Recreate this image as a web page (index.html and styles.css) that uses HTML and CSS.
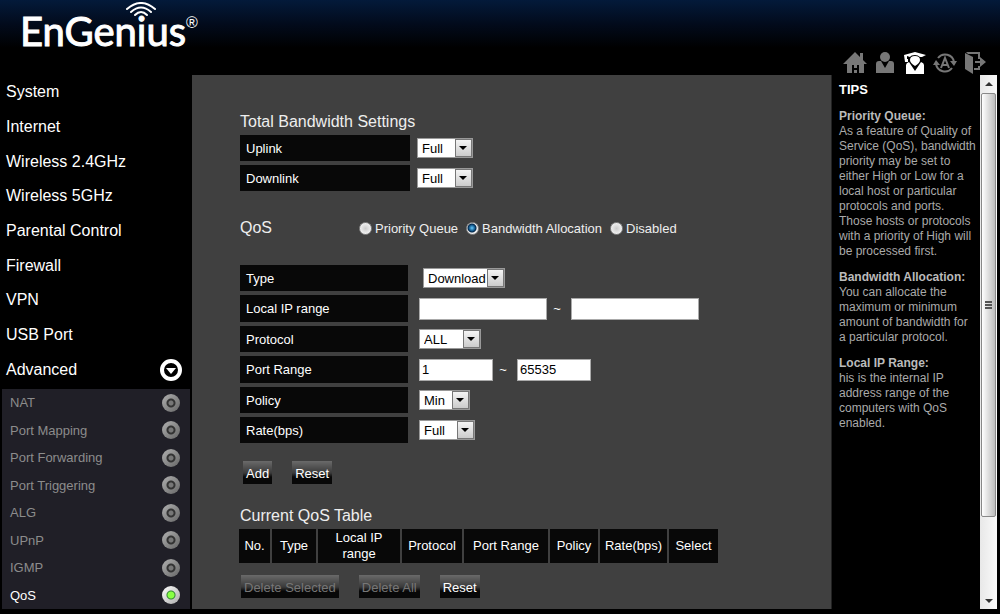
FILE: index.html
```html
<!DOCTYPE html>
<html lang="en">

<head>
    <meta charset="UTF-8">
    <meta name="viewport" content="width=device-width, initial-scale=1.0">
    <title>EnGenius - QoS</title>
    <link rel="stylesheet" href="styles.css">
</head>

<body>

    <header class="header">
        <a class="logo" href="#">
            <span class="logo-text">EnGenius</span><sup class="logo-mark">®</sup>
            <svg class="logo-waves" viewBox="0 0 32 16" width="32" height="16" fill="none" stroke="#fff" stroke-width="2" stroke-linecap="round">
                <path d="M2 7 Q16 -5 30 7" />
                <path d="M6 10 Q16 1 26 10" />
                <path d="M10 13 Q16 7 22 13" />
            </svg>
        </a>

        <nav class="tools">
            <a href="#" aria-label="Home">
                <svg viewBox="0 0 24 24" width="24" height="24" fill="currentColor">
                    <path d="M12 1 L0 13 H4 V22 H9 V14 H11 V17 H14 V14 H16 V22 H21 V13 H24 L20 9 V2 H17 V6 Z M11 19 H14 V22 H11 Z" />
                </svg>
            </a>
            <a href="#" aria-label="User">
                <svg viewBox="0 0 24 24" width="24" height="24" fill="currentColor">
                    <circle cx="12" cy="6" r="5" />
                    <path d="M3 13 Q3 10 6 10 H8 L12 17 L16 10 H18 Q21 10 21 13 V22 H3 Z" />
                </svg>
            </a>
            <a href="#" class="active" aria-label="Tips">
                <svg viewBox="0 0 24 24" width="24" height="24" fill="currentColor">
                    <path d="M1 4 L12 1 L23 4 L19 6 H17 Q15 4 12 4 Q8 4 7 6 L4 5 V8 H5 V11 H2 Z" />
                    <path d="M12 5 Q17 5 17 9 Q17 12 12 15 Q7 12 7 9 Q7 5 12 5 Z" />
                    <path d="M3 14 Q3 12 6 11 L12 20 L18 11 Q21 12 21 14 V23 H3 Z" />
                </svg>
            </a>
            <a href="#" aria-label="Auto">
                <svg viewBox="0 0 24 24" width="24" height="24" fill="none" stroke="currentColor" stroke-width="2">
                    <path d="M5 7 A9 9 0 0 1 21 11 M19 17 A9 9 0 0 1 3 13 M8 17 L12 7 L16 17 M9 14 H15" />
                    <path d="M0 14 L3 9 L7 14 Z M24 10 L21 15 L17 10 Z" fill="currentColor" stroke="none" />
                </svg>
            </a>
            <a href="#" aria-label="Logout">
                <svg viewBox="0 0 24 24" width="24" height="24" fill="currentColor">
                    <path d="M2 2 L10 6 V23 L2 18 Z" />
                    <path d="M3 1 H17 V8 H15 V3 H5 Z M15 15 H17 V19 H11 V17 H15 Z M12 10 H17 V6 L23 11 L17 16 V12 H12 Z" />
                </svg>
            </a>
        </nav>
    </header>

    <div class="page">

        <nav class="sidebar">
            <ul class="menu">
                <li><a href="#">System</a></li>
                <li><a href="#">Internet</a></li>
                <li><a href="#">Wireless 2.4GHz</a></li>
                <li><a href="#">Wireless 5GHz</a></li>
                <li><a href="#">Parental Control</a></li>
                <li><a href="#">Firewall</a></li>
                <li><a href="#">VPN</a></li>
                <li><a href="#">USB Port</a></li>
                <li>
                    <a href="#">Advanced</a>
                    <svg viewBox="0 0 24 24" width="24" height="24">
                        <circle cx="12" cy="12" r="9" fill="#000" stroke="#fff" stroke-width="4" />
                        <path d="M7 10 H17 L12 16 Z" fill="#fff" />
                    </svg>
                </li>
            </ul>
            <ul class="submenu">
                <li><a href="#">NAT</a><span class="led"></span></li>
                <li><a href="#">Port Mapping</a><span class="led"></span></li>
                <li><a href="#">Port Forwarding</a><span class="led"></span></li>
                <li><a href="#">Port Triggering</a><span class="led"></span></li>
                <li><a href="#">ALG</a><span class="led"></span></li>
                <li><a href="#">UPnP</a><span class="led"></span></li>
                <li><a href="#">IGMP</a><span class="led"></span></li>
                <li class="active"><a href="#">QoS</a><span class="led"></span></li>
            </ul>
        </nav>

        <main class="content">
            <h2>Total Bandwidth Settings</h2>
            <div class="form total">
                <label class="name" for="uplink">Uplink</label>
                <div class="field"><span class="select"><select id="uplink"><option>Full</option></select></span></div>
                <label class="name" for="downlink">Downlink</label>
                <div class="field"><span class="select"><select id="downlink"><option>Full</option></select></span></div>
            </div>

            <div class="mode">
                <h2>QoS</h2>
                <label><input type="radio" name="mode">Priority Queue</label>
                <label><input type="radio" name="mode" checked>Bandwidth Allocation</label>
                <label><input type="radio" name="mode">Disabled</label>
            </div>

            <div class="form">
                <label class="name" for="type">Type</label>
                <div class="field type-field"><span class="select"><select id="type" class="wide"><option>Download</option></select></span></div>

                <label class="name tall" for="ip-start">Local IP range</label>
                <div class="field">
                    <input type="text" class="ip" id="ip-start">
                    <span class="tilde">~</span>
                    <input type="text" class="ip" aria-label="Local IP range end">
                </div>

                <label class="name" for="protocol">Protocol</label>
                <div class="field"><span class="select"><select id="protocol" class="medium"><option>ALL</option></select></span></div>

                <label class="name tall" for="port-start">Port Range</label>
                <div class="field">
                    <input type="text" class="port" id="port-start" value="1">
                    <span class="tilde">~</span>
                    <input type="text" class="port" value="65535" aria-label="Port Range end">
                </div>

                <label class="name" for="policy">Policy</label>
                <div class="field"><span class="select"><select id="policy" class="narrow"><option>Min</option></select></span></div>

                <label class="name" for="rate">Rate(bps)</label>
                <div class="field"><span class="select"><select id="rate"><option>Full</option></select></span></div>
            </div>

            <div class="buttons">
                <button type="button">Add</button>
                <button type="button">Reset</button>
            </div>

            <h2>Current QoS Table</h2>
            <table class="qos-table">
                <thead>
                    <tr>
                        <th class="col-no">No.</th>
                        <th class="col-type">Type</th>
                        <th class="col-ip">Local IP<br>range</th>
                        <th class="col-protocol">Protocol</th>
                        <th class="col-port">Port Range</th>
                        <th class="col-policy">Policy</th>
                        <th class="col-rate">Rate(bps)</th>
                        <th class="col-select">Select</th>
                    </tr>
                </thead>
            </table>

            <div class="buttons table-buttons">
                <button type="button" disabled>Delete Selected</button>
                <button type="button" disabled>Delete All</button>
                <button type="button">Reset</button>
            </div>
        </main>

        <aside class="tips">
            <h3>TIPS</h3>
            <p><b>Priority Queue:</b><br>As a feature of Quality of Service (QoS), bandwidth priority may be set to either High or Low for a local host or particular protocols and ports. Those hosts or protocols with a priority of High will be processed first.</p>
            <p><b>Bandwidth Allocation:</b><br>You can allocate the maximum or minimum amount of bandwidth for a particular protocol.</p>
            <p><b>Local IP Range:</b><br>his is the internal IP address range of the computers with QoS enabled.</p>
        </aside>

        <div class="scrollbar">
            <span class="arrow up"></span>
            <span class="thumb"><span class="grip"></span></span>
            <span class="arrow down"></span>
        </div>

    </div>

</body>

</html>
```
FILE: styles.css
```css
*,
*::before,
*::after {
    box-sizing: border-box;
}

body {
    font-family: "Liberation Sans", Arial, sans-serif;
    font-size: 13px;
    background-color: #000;
    color: #fff;
    margin: 0;
    height: 100vh;
    display: flex;
    flex-direction: column;
}

a {
    color: inherit;
    text-decoration: none;
}

ul {
    list-style: none;
    margin: 0;
    padding: 0;
}

h2 {
    font-size: 16px;
    font-weight: normal;
    line-height: 22px;
    color: #eee;
    margin: 0;
}

/* Header */
.header {
    display: flex;
    justify-content: space-between;
    align-items: flex-end;
    height: 75px;
    padding: 0 13px 0 20px;
    background: linear-gradient(#031a3a, #020b1c 24px, #000 48px);
}

.logo {
    position: relative;
    align-self: flex-start;
    display: flex;
    padding-top: 6px;
}

.logo-text {
    font-family: Lato, sans-serif;
    font-size: 40px;
    line-height: 50px;
    -webkit-text-stroke: 1px #fff;
}

.logo-mark {
    font-size: 16px;
    line-height: 34px;
}

.logo-waves {
    position: absolute;
    left: 105px;
    top: 2px;
}

.tools {
    display: flex;
    gap: 6px;
    color: #777;
}

.tools svg {
    display: block;
}

.tools .active {
    color: #fff;
}

.page {
    flex: 1;
    display: flex;
    padding: 0 3px 5px 0;
}

/* Left menu */
.sidebar {
    width: 192px;
    padding: 0 2px;
    display: flex;
    flex-direction: column;
    gap: 2px;
}

.menu {
    flex: 1;
    display: grid;
    grid-auto-rows: 1fr;
    font-size: 16px;
}

.menu li,
.submenu li {
    display: flex;
    justify-content: space-between;
    align-items: center;
    padding: 0 7px 0 4px;
}

.submenu {
    height: 220px;
    display: grid;
    grid-auto-rows: 1fr;
    background-color: #201f27;
    color: #8c8c8c;
}

.submenu li {
    padding: 0 10px 0 8px;
}

.submenu .active {
    color: #fff;
}

.led {
    width: 18px;
    height: 18px;
    border-radius: 50%;
    background: radial-gradient(#777 2px, #333 3px, #333 4px, transparent 5px), linear-gradient(135deg, #b0b0b0, #666);
}

.active .led {
    background: radial-gradient(#8f4 3px, #383 4px, transparent 5px), linear-gradient(135deg, #fff, #aaa);
}

/* Main panel */
.content {
    flex: 1;
    background-color: #404040;
    padding: 36px 0 0 48px;
}

.form {
    display: grid;
    grid-template-columns: 168px 1fr;
    column-gap: 11px;
    row-gap: 4px;
}

.total {
    grid-template-columns: 170px 1fr;
    column-gap: 7px;
    margin-top: 2px;
}

.name {
    background-color: #080808;
    height: 26px;
    line-height: 26px;
    padding: 1px 0 0 6px;
}

.tall {
    height: 27px;
}

.field {
    display: flex;
    align-items: center;
}

.type-field {
    padding-left: 4px;
}

.select {
    position: relative;
    display: flex;
}

.select select {
    appearance: none;
    font: inherit;
    width: 56px;
    height: 20px;
    border: 1px solid #999;
    border-radius: 0;
    background-color: #fff;
    color: #000;
    padding: 1px 18px 0 4px;
    margin: 0;
}

.select .narrow {
    width: 51px;
}

.select .medium {
    width: 62px;
}

.select .wide {
    width: 82px;
}

/* Drop-down button and its arrow */
.select::before {
    content: "";
    position: absolute;
    top: 1px;
    right: 1px;
    width: 17px;
    height: 18px;
    border: 1px solid #777;
    background: linear-gradient(#f4f4f4, #ccc);
    pointer-events: none;
}

.select::after {
    content: "";
    position: absolute;
    top: 8px;
    right: 6px;
    border: 4px solid transparent;
    border-top-color: #000;
    border-bottom: 0;
    pointer-events: none;
}

input[type="text"] {
    font: inherit;
    height: 22px;
    border: 1px solid #aaa;
    background-color: #fff;
    color: #000;
    padding: 0 2px;
    margin: 0;
}

.ip {
    width: 128px;
}

.port {
    width: 74px;
}

.tilde {
    width: 24px;
    padding-right: 4px;
    text-align: center;
}

.mode {
    display: flex;
    align-items: center;
    gap: 8px;
    margin: 26px 0;
    color: #eee;
}

.mode h2 {
    width: 111px;
}

.mode label {
    display: flex;
    align-items: center;
    gap: 3px;
}

.mode input {
    appearance: none;
    width: 13px;
    height: 13px;
    margin: 0;
    border: 1px solid #888;
    border-radius: 50%;
    background: radial-gradient(#ccc, #fff);
}

.mode input:checked {
    background: radial-gradient(circle at 5px 5px, #6cf 0, #158 3px, #024 4px, #eee 5px);
}

.buttons {
    display: flex;
    gap: 20px;
    margin: 18px 0 21px 3px;
}

.table-buttons {
    margin: 10px 0 0 1px;
}

button {
    font: inherit;
    height: 23px;
    padding: 1px 3px 0;
    border: 0;
    color: #fff;
    background: linear-gradient(#6a6a6a, #3a3a3a 12px, #080808 16px);
}

button:disabled {
    color: #777;
}

.qos-table {
    border-spacing: 2px;
    margin-left: -3px;
}

.qos-table th {
    height: 34px;
    padding: 0;
    background-color: #080808;
    font-weight: normal;
    line-height: 16px;
}

.qos-table .col-no {
    width: 31px;
}

.qos-table .col-type {
    width: 44px;
}

.qos-table .col-ip {
    width: 82px;
}

.qos-table .col-protocol {
    width: 60px;
}

.qos-table .col-port {
    width: 84px;
}

.qos-table .col-policy {
    width: 48px;
}

.qos-table .col-rate {
    width: 67px;
}

.qos-table .col-select {
    width: 49px;
}

/* Tips column */
.tips {
    width: 149px;
    padding: 7px 3px 0 7px;
    border-left: 1px solid #222;
    font-size: 12px;
    line-height: 15px;
    color: #aaa;
}

.tips h3 {
    font-size: 13px;
    line-height: 16px;
    color: #fff;
    margin: 0 0 11px;
}

.tips p {
    margin: 0 0 11px;
}

.tips b {
    color: #bbb;
}

.scrollbar {
    width: 17px;
    background: linear-gradient(90deg, #e8e8e8, #fafafa);
    display: flex;
    flex-direction: column;
    align-items: center;
}

.thumb {
    flex: 1;
    display: flex;
    justify-content: center;
    align-items: center;
    width: 15px;
    margin-bottom: 82px;
    border: 1px solid #888;
    border-radius: 2px;
    background: linear-gradient(90deg, #fff, #ddd 50%, #bbb);
}

.grip {
    width: 7px;
    height: 8px;
    background: repeating-linear-gradient(#555 0, #555 2px, transparent 2px, transparent 3px);
}

.arrow {
    border: 4px solid transparent;
}

.up {
    border-top: 0;
    border-bottom-color: #333;
    margin: 7px 0;
}

.down {
    border-bottom: 0;
    border-top-color: #333;
    margin-bottom: 6px;
}
```
